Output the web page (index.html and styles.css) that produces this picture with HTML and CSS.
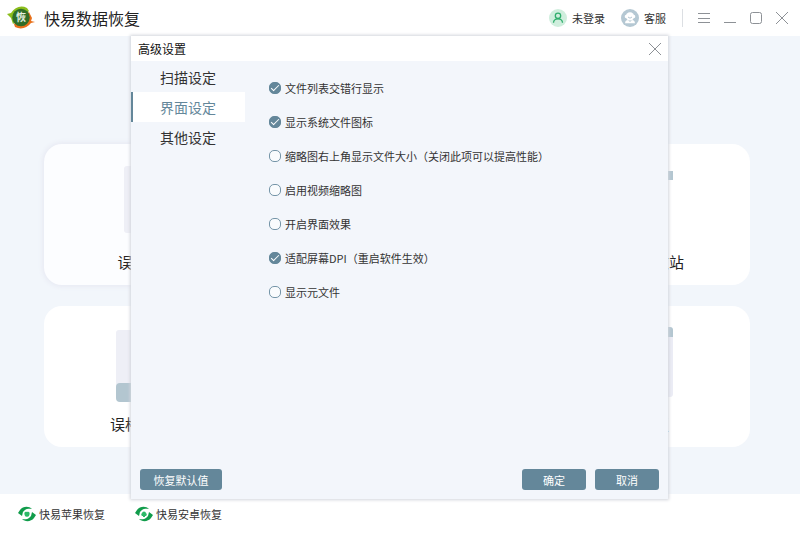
FILE: index.html
```
<!DOCTYPE html>
<html lang="zh-CN">
<head>
  <meta charset="UTF-8">
  <title>快易数据恢复</title>
  <link rel="stylesheet" href="styles.css">
</head>
<body>
  <header class="topbar">
    <svg class="logo" viewBox="0 0 28 24">
      <path d="M0 8 L4 7 C8 1 14 -1 20 2 L22 5 L14 12 L6 18 L4 12 Z" fill="#8bbd1c"/>
      <path d="M28 16 L24 17 C20 22 14 24 8 21 L7 18 L14 12 L22 6 L25 12 L24 15 Z" fill="#e8701a"/>
      <circle cx="14" cy="11.500" r="8.700" fill="#2f6d28"/>
      <text x="14" y="15" text-anchor="middle" class="logo-text">恢</text>
    </svg>
    <h1>快易数据恢复</h1>

    <a class="account" href="#">
      <svg viewBox="0 0 18 18">
        <circle cx="9" cy="9" r="9" fill="#cfeedd"/>
        <circle cx="9" cy="6.8" r="2.7" fill="none" stroke="#2fae6c" stroke-width="1.3"/>
        <path d="M4.5 13.8 C4.8 8.6 13.2 8.6 13.5 13.8" fill="none" stroke="#2fae6c" stroke-width="1.3"/>
      </svg>
      <span>未登录</span>
    </a>
    <a class="account" href="#">
      <svg viewBox="0 0 18 18">
        <circle cx="9" cy="9" r="9" fill="#b5c8d3"/>
        <circle cx="9" cy="7.4" r="4.2" fill="#fff"/>
        <rect x="3.8" y="6" width="10.4" height="3" rx="1" fill="#fff"/>
        <path d="M4 14.2 C4.2 11.6 6 11 7 11 L9 13 L11 11 C12 11 13.8 11.6 14 14.2 Z" fill="#fff"/>
        <path d="M7 8 Q9 10.4 11 8" fill="none" stroke="#b5c8d3"/>
      </svg>
      <span>客服</span>
    </a>

    <div class="window-buttons">
      <button type="button" aria-label="菜单"><svg viewBox="0 0 14 14"><path d="M1 2.5 H13 M1 7.5 H13 M1 11.5 H13"/></svg></button>
      <button type="button" aria-label="最小化"><svg viewBox="0 0 14 14"><path d="M1 11.5 H13"/></svg></button>
      <button type="button" aria-label="最大化"><svg viewBox="0 0 14 14"><rect x="1.5" y="1.5" width="11" height="11" rx="2"/></svg></button>
      <button type="button" aria-label="关闭"><svg viewBox="0 0 14 14"><path d="M1 1 L13 13 M13 1 L1 13"/></svg></button>
    </div>
  </header>

  <main class="cards">
    <div class="card active">
      <svg viewBox="0 0 80 80"><rect x="9" y="2" width="62" height="67" rx="3" fill="#eeeff6"/></svg>
      <h2>误删除文件</h2>
    </div>
    <div class="card"></div>
    <div class="card">
      <svg viewBox="0 0 80 80"><rect x="6" y="7" width="68" height="9" fill="#b3c6d0"/></svg>
      <h2>误清空回收站</h2>
    </div>
    <div class="card">
      <svg viewBox="0 0 80 80">
        <rect x="1" y="4" width="78" height="60" rx="3" fill="#eeeff6"/>
        <rect x="1" y="57" width="78" height="19" rx="4" fill="#b3c6d0"/>
      </svg>
      <h2>误格式化硬盘</h2>
    </div>
    <div class="card"></div>
    <div class="card">
      <svg viewBox="0 0 80 80">
        <rect x="6" y="2" width="68" height="69" rx="3" fill="#ebecf5"/>
        <path d="M6 11 V4 Q6 1 9 1 H71 Q74 1 74 4 V11 Z" fill="#b3c6d0"/>
      </svg>
      <h2>万能恢复</h2>
    </div>
  </main>

  <footer class="bottombar">
    <a href="#">
      <svg viewBox="0 0 18 16">
        <path d="M0 7 L2 4 C5 0 11 0 14 3 C9 2 5 4 4.500 8 L4 10 Z" fill="#119c4b"/>
        <path d="M18 9 L16 12 C13 16 7 16 4 13 C9 14 13 12 13.500 8 L14 6 Z" fill="#119c4b"/>
        <path d="M9 6 C7 5 6 6.500 6.500 8.500 C7 10.500 8 11 9 10.500 C10 11 11 10.500 11.500 8.500 C12 6.500 11 5 9 6 Z" fill="#2cba68"/>
      </svg>
      <span>快易苹果恢复</span>
    </a>
    <a href="#">
      <svg viewBox="0 0 18 16">
        <path d="M0 7 L2 4 C5 0 11 0 14 3 C9 2 5 4 4.500 8 L4 10 Z" fill="#119c4b"/>
        <path d="M18 9 L16 12 C13 16 7 16 4 13 C9 14 13 12 13.500 8 L14 6 Z" fill="#119c4b"/>
        <path d="M7 7.500 A2 2 0 0 1 11 7.500 V10 H10 V11 H8 V10 H7 Z M6 7.500 H6.700 V9.500 H6 Z M11.300 7.500 H12 V9.500 H11.300 Z" fill="#2cba68"/>
      </svg>
      <span>快易安卓恢复</span>
    </a>
  </footer>

  <!-- Settings dialog -->
  <div class="overlay">
    <section class="dialog" role="dialog" aria-labelledby="dialogTitle">
      <div class="dialog-title">
        <h2 id="dialogTitle">高级设置</h2>
        <button type="button" aria-label="关闭"><svg viewBox="0 0 14 14"><path d="M1 1 L13 13 M13 1 L1 13"/></svg></button>
      </div>
      <div class="dialog-body">
        <nav class="tabs">
          <a href="#">扫描设定</a>
          <a href="#" class="selected">界面设定</a>
          <a href="#">其他设定</a>
        </nav>
        <div class="options">
          <label><input type="checkbox" checked><span>文件列表交错行显示</span></label>
          <label><input type="checkbox" checked><span>显示系统文件图标</span></label>
          <label><input type="checkbox"><span>缩略图右上角显示文件大小（关闭此项可以提高性能）</span></label>
          <label><input type="checkbox"><span>启用视频缩略图</span></label>
          <label><input type="checkbox"><span>开启界面效果</span></label>
          <label><input type="checkbox" checked><span>适配屏幕DPI（重启软件生效）</span></label>
          <label><input type="checkbox"><span>显示元文件</span></label>
        </div>
      </div>
      <div class="dialog-actions">
        <button type="button" class="reset">恢复默认值</button>
        <button type="button">确定</button>
        <button type="button">取消</button>
      </div>
    </section>
  </div>
</body>
</html>
```
FILE: styles.css
```
*,
*::after {
  box-sizing: border-box;
}

body {
  margin: 0;
  min-height: 100vh;
  display: flex;
  flex-direction: column;
  position: relative;
  background-color: #fff;
  color: #333;
  font-family: "Noto Sans CJK SC", sans-serif;
  font-size: 11px;
  line-height: 16px;
}

h1, h2 {
  margin: 0;
  font-weight: normal;
}

a {
  color: inherit;
  text-decoration: none;
}

button {
  padding: 0;
  border: none;
  background: none;
  font: inherit;
  cursor: pointer;
}

svg {
  display: block;
}

/* Top bar */
.topbar {
  display: flex;
  align-items: center;
  height: 36px;
  padding: 0 11px 0 7px;
}

.logo {
  width: 28px;
  height: 24px;
}

.logo-text {
  font-size: 10px;
  font-weight: bold;
  fill: #e3efe0;
}

h1 {
  margin-left: 9px;
  margin-right: auto;
  font-size: 16px;
  line-height: 24px;
  color: #222;
}

.account {
  display: flex;
  align-items: center;
  gap: 5px;
  margin-right: 16px;
}

.account svg {
  width: 18px;
  height: 18px;
}

.window-buttons {
  display: flex;
  gap: 12px;
  padding-left: 14px;
  border-left: 1px solid #dcdfe3;
}

.window-buttons button {
  height: 18px;
}

.window-buttons svg,
.dialog-title svg {
  width: 14px;
  height: 14px;
  fill: none;
  stroke: #8d9196;
}

/* Cards */
.cards {
  flex: 1;
  display: grid;
  grid-template-columns: repeat(3, 1fr);
  grid-auto-rows: 141px;
  gap: 21px 20px;
  padding: 108px 50px 47px 44px;
  background-color: #f2f6fb;
}

.card {
  display: flex;
  flex-direction: column;
  align-items: center;
  gap: 6px;
  padding-top: 20px;
  border-radius: 18px;
  background-color: #fff;
}

.card.active {
  background-color: #fcfdff;
  box-shadow: 0 0 4px 2px #e9ebf4;
}

.card svg {
  width: 80px;
  height: 80px;
}

.card h2 {
  font-size: 15px;
  line-height: 24px;
  color: #222;
}

/* Footer */
.bottombar {
  display: flex;
  align-items: center;
  gap: 30px;
  height: 39px;
  padding: 0 18px;
}

.bottombar a {
  display: flex;
  align-items: center;
  gap: 3px;
}

.bottombar svg {
  width: 18px;
  height: 16px;
}

/* Dialog */
.overlay {
  position: absolute;
  inset: 0;
  display: flex;
  padding: 36px 132px 34px 131px;
}

.dialog {
  flex: 1;
  display: flex;
  flex-direction: column;
  background-color: #f3f6fb;
  box-shadow: 0 0 3px 1px #d2d5dc;
}

.dialog-title {
  display: flex;
  align-items: center;
  justify-content: space-between;
  height: 25px;
  padding: 0 6px 0 7px;
  background-color: #fff;
}

.dialog-title h2 {
  font-size: 12px;
  color: #111;
}

.dialog-body {
  flex: 1;
  display: flex;
}

.tabs {
  width: 114px;
  padding-top: 1px;
}

.tabs a {
  display: block;
  height: 30px;
  padding-left: 27px;
  border-left: 2px solid transparent;
  font-size: 14px;
  line-height: 30px;
}

.tabs .selected {
  border-left-color: #64879a;
  background-color: #fff;
  color: #64879a;
}

.options {
  padding: 10px 0 0 24px;
}

.options label {
  display: flex;
  align-items: center;
  gap: 4px;
  height: 34px;
}

.options input {
  appearance: none;
  position: relative;
  width: 12px;
  height: 12px;
  margin: 0;
  border: 1px solid #7595a8;
  border-radius: 5px;
  background-color: #f9fbfd;
}

.options input:checked {
  border-color: #64879a;
  background-color: #64879a;
}

.options input:checked::after {
  content: '';
  position: absolute;
  left: 1px;
  top: 2px;
  width: 8px;
  height: 4px;
  border-left: 1px solid #fff;
  border-bottom: 1px solid #fff;
  transform: rotate(-45deg);
}

.dialog-actions {
  display: flex;
  gap: 9px;
  padding: 0 9px 9px;
}

.dialog-actions button {
  width: 64px;
  height: 21px;
  border-radius: 3px;
  background-color: #64879a;
  color: #fff;
}

.dialog-actions .reset {
  width: 82px;
  margin-right: auto;
}
```
